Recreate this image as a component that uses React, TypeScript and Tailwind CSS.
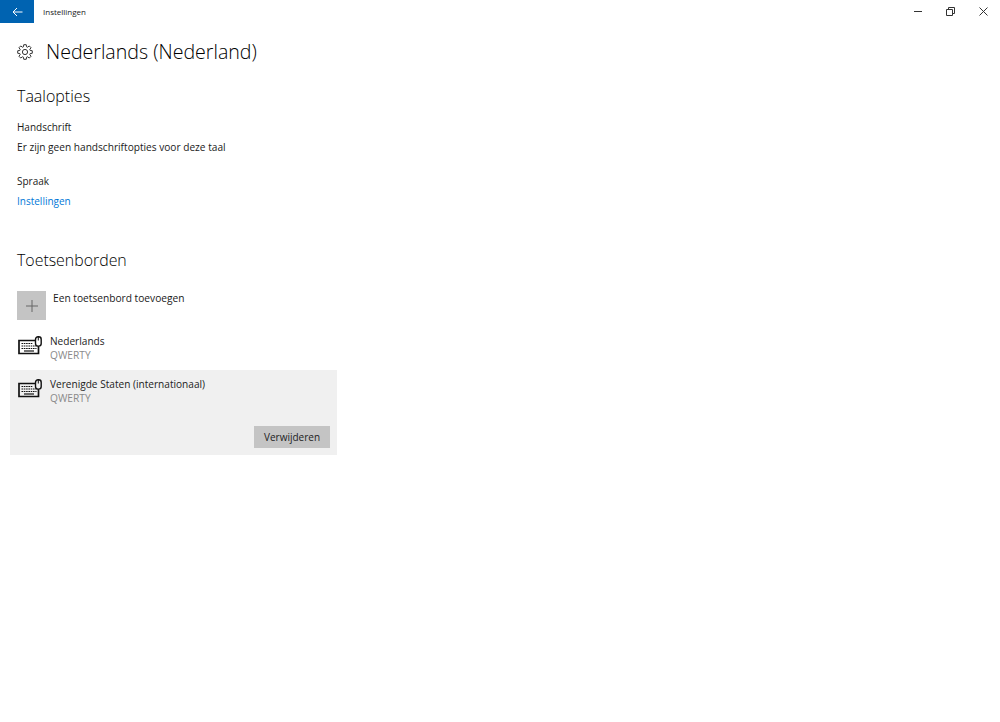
function KeyboardIcon() {
  return (
    <svg width="24" height="19" viewBox="0 0 24 19" fill="none" stroke="#111" className="shrink-0">
      <path d="M17 4.500H1V17.500H20.500V11" strokeWidth="1.700" />
      <path d="M3.500 7.500H15M3.500 10H18.500M3.500 12.500H18.500" strokeWidth="1.200" strokeDasharray="1.600 0.700" />
      <path d="M6 15H16" strokeWidth="1.200" />
      <rect x="17.500" y="0.800" width="5.700" height="9.400" rx="2.600" strokeWidth="1.400" />
      <path d="M20.300 1V4.500" strokeWidth="1" />
    </svg>
  )
}

// 8 tooth gear outline, a trapezoid per tooth
const gearPoints = Array.from({ length: 8 }, (_, i) => {
  const a = (i * Math.PI) / 4
  return [[-0.3, 5.4], [-0.17, 7.4], [0.17, 7.4], [0.3, 5.4]]
    .map(([d, r]) => `${(8 + r * Math.sin(a + d)).toFixed(2)},${(8 - r * Math.cos(a + d)).toFixed(2)}`)
    .join(" ")
}).join(" ")

function GearIcon() {
  return (
    <svg width="16" height="16" viewBox="0 0 16 16" fill="none" stroke="#333" strokeWidth="1">
      <polygon points={gearPoints} />
      <circle cx="8" cy="8" r="2.600" />
    </svg>
  )
}

function KeyboardRow(props: { name: string, selected?: boolean }) {
  return (
    <div className={props.selected ? "w-[327px] h-[85px] bg-[#f0f0f0] pt-[7px]" : "w-[327px] h-[44px] pt-[8px]"}>
      <div className="flex">
        <div className="ml-[8px] mt-[2px] w-[32px]">
          <KeyboardIcon />
        </div>
        <div>
          <div className="text-[10.100px] leading-[15px] text-[#222]">{props.name}</div>
          <div className="text-[10.200px] leading-[13px] text-[#8a8a8a]">QWERTY</div>
        </div>
      </div>
      {props.selected && (
        <div className="flex justify-end mt-[21px] pr-[7px]">
          <button className="w-[76px] h-[22px] bg-[#c4c4c4] text-[10px] text-[#222]">Verwijderen</button>
        </div>
      )}
    </div>
  )
}

export default function App() {
  return (
    <div className="w-[1000px] h-[722px] bg-white overflow-hidden font-['Open_Sans',sans-serif] text-[#1a1a1a]">
      <div className="flex items-center h-[23px]">
        <div className="flex items-center justify-center w-[34px] h-[23px] bg-[#0063b1]">
          <svg width="11" height="10" viewBox="0 0 11 10" fill="none" stroke="#fff" strokeWidth="1">
            <path d="M10.500 5H1M5 1L1 5l4 4" />
          </svg>
        </div>
        <div className="ml-[9px] text-[8px]">Instellingen</div>
        <div className="flex items-center ml-auto">
          <div className="flex items-center justify-center w-[33px] h-[23px]">
            <div className="w-[8px] h-px bg-[#333]" />
          </div>
          <div className="flex items-center justify-center w-[33px] h-[23px]">
            <svg width="9" height="9" viewBox="0 0 9 9" fill="none" stroke="#333">
              <path d="M.5 2.500h6v6h-6zM2.500 2.500v-2h6v6h-2" />
            </svg>
          </div>
          <div className="flex items-center justify-center w-[33px] h-[23px]">
            <svg width="9" height="9" viewBox="0 0 9 9" fill="none" stroke="#333">
              <path d="M.5.5l8 8M8.500.5l-8 8" />
            </svg>
          </div>
        </div>
      </div>

      <div className="flex items-center pl-[17px] pt-[15px]">
        <div className="-mt-[1px]">
          <GearIcon />
        </div>
        <h1 className="ml-[13px] text-[19.600px] leading-[28px] font-light text-black">Nederlands (Nederland)</h1>
      </div>

      <div className="pl-[17px] pt-[18px]">
        <h2 className="text-[16px] leading-[24px] font-light text-black">Taalopties</h2>
        <div className="mt-[11px] text-[10px] leading-[16px]">Handschrift</div>
        <div className="mt-[4px] text-[10.150px] leading-[16px]">Er zijn geen handschriftopties voor deze taal</div>
        <div className="mt-[18px] text-[10px] leading-[16px]">Spraak</div>
        <div className="mt-[4px] text-[10px] leading-[16px] text-[#0078d7]">Instellingen</div>
        <h2 className="mt-[39px] text-[15.900px] leading-[24px] font-light text-black">Toetsenborden</h2>
        <div className="flex mt-[19px]">
          <div className="flex items-center justify-center w-[29px] h-[29px] bg-[#c4c4c4]">
            <svg width="12" height="12" viewBox="0 0 12 12" stroke="#666">
              <path d="M6 0v12M0 6h12" />
            </svg>
          </div>
          <div className="ml-[7px] -mt-[1px] text-[10.200px] leading-[16px]">Een toetsenbord toevoegen</div>
        </div>
      </div>

      <div className="ml-[10px] mt-[6px]">
        <KeyboardRow name="Nederlands" />
        <KeyboardRow name="Verenigde Staten (internationaal)" selected />
      </div>
    </div>
  )
}
